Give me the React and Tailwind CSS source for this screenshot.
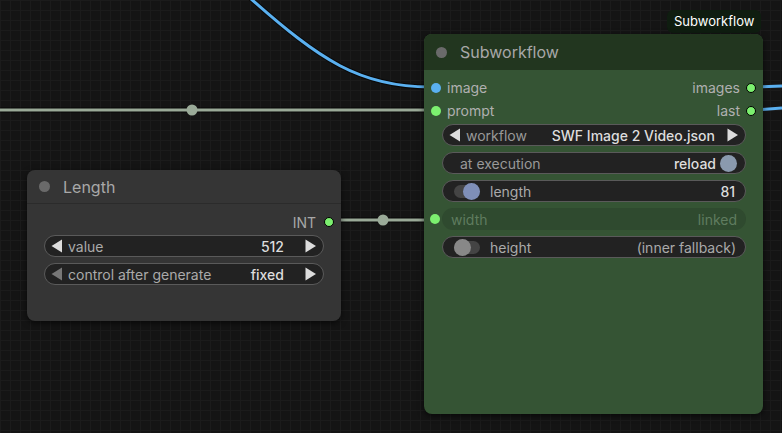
import React from "react";

const font = { fontFamily: "Inter, 'Noto Sans', sans-serif" };

function Dot({ color = "bg-[#7cf06f]" }) {
  return <span className={`inline-block w-[10px] h-[10px] rounded-full border border-black ${color}`} />;
}

function Arrow({ dir, dim }) {
  const d = dir === "left" ? "M11 0.5 L11 13.5 L0.5 7 Z" : "M0.5 0.5 L0.5 13.5 L11 7 Z";
  return (
    <svg width="12" height="14" viewBox="0 0 12 14" className="block">
      <path d={d} fill={dim ? "#777" : "#ddd"} />
    </svg>
  );
}

function Widget({ children, faded }) {
  return (
    <div
      className={`h-[22px] rounded-full flex items-center text-[14px] ${
        faded ? "bg-[#2f4a2f]" : "bg-[#222] border border-[#5a5a5a]"
      }`}
    >
      {children}
    </div>
  );
}

function LengthNode() {
  return (
    <div className="absolute left-[27px] top-[170px] w-[314px] h-[151px] rounded-lg bg-[#353535] shadow-[0_2px_6px_rgba(0,0,0,0.6)]">
      <div className="h-[34px] flex items-center gap-[13px] px-[12px] border-b border-[#2b2b2b]">
        <span className="w-[11px] h-[11px] rounded-full bg-[#6a6a6a]" />
        <span className="text-[16px] text-[#a8a8a8]">Length</span>
      </div>
      <div className="flex justify-end items-center gap-[8px] pr-[7px] h-[28px] mt-[4px]">
        <span className="text-[14px] text-[#a8a8a8]">INT</span>
        <Dot />
      </div>
      <div className="flex flex-col gap-[6px] px-[17px] mt-[-1px]">
        <Widget>
          <span className="pl-[6px]"><Arrow dir="left" /></span>
          <span className="ml-[5px] text-[#aaa]">value</span>
          <span className="ml-auto font-medium text-[#ddd]">512</span>
          <span className="ml-[21px] pr-[6px]"><Arrow dir="right" /></span>
        </Widget>
        <Widget>
          <span className="pl-[6px]"><Arrow dir="left" dim /></span>
          <span className="ml-[5px] text-[#aaa]">control after generate</span>
          <span className="ml-auto font-medium text-[#ddd]">fixed</span>
          <span className="ml-[21px] pr-[6px]"><Arrow dir="right" /></span>
        </Widget>
      </div>
    </div>
  );
}

function SubworkflowNode() {
  return (
    <>
      <div className="absolute left-[667px] top-[10px] h-[23px] px-[7px] rounded-md bg-[#0f1d10] text-white text-[13px] flex items-center">
        Subworkflow
      </div>
      <div className="absolute left-[424px] top-[34px] w-[339px] h-[380px] rounded-lg bg-[#355434] shadow-[0_2px_6px_rgba(0,0,0,0.6)] overflow-hidden">
        <div className="h-[36px] flex items-center gap-[13px] px-[12px] bg-[#22361f]">
          <span className="w-[11px] h-[11px] rounded-full bg-[#6a6a6a]" />
          <span className="text-[16px] text-[#a8a8a8]">Subworkflow</span>
        </div>
        <div className="flex flex-col pt-[6px]">
          <div className="flex items-center h-[23px] px-[7px]">
            <Dot color="bg-[#5ab0f0] border-transparent" />
            <span className="ml-[6px] text-[14px] text-[#b0b0b0]">image</span>
            <span className="ml-auto mr-[6px] text-[14px] text-[#b0b0b0]">images</span>
            <Dot />
          </div>
          <div className="flex items-center h-[23px] px-[7px]">
            <Dot color="bg-[#7cf06f] border-transparent" />
            <span className="ml-[6px] text-[14px] text-[#b0b0b0]">prompt</span>
            <span className="ml-auto mr-[6px] text-[14px] text-[#b0b0b0]">last</span>
            <Dot />
          </div>
        </div>
        <div className="flex flex-col gap-[6px] mt-[2px] pl-[18px] pr-[17px]">
          <Widget>
            <span className="pl-[6px]"><Arrow dir="left" /></span>
            <span className="ml-[5px] text-[#999]">workflow</span>
            <span className="ml-auto font-medium text-[#ddd]">SWF Image 2 Video.json</span>
            <span className="ml-[12px] pr-[6px]"><Arrow dir="right" /></span>
          </Widget>
          <Widget>
            <span className="ml-[17px] text-[#999]">at execution</span>
            <span className="ml-auto font-medium text-[#ddd]">reload</span>
            <span className="ml-[4px] mr-[8px] w-[17px] h-[17px] rounded-full bg-[#8a9aae]" />
          </Widget>
          <Widget>
            <span className="ml-[11px] relative w-[26px] h-[13px] rounded-full bg-[#444]">
              <span className="absolute right-0 top-[-2px] w-[17px] h-[17px] rounded-full bg-[#7f8fb8]" />
            </span>
            <span className="ml-[10px] text-[#aaa]">length</span>
            <span className="ml-auto mr-[10px] font-medium text-[#ddd]">81</span>
          </Widget>
          <div className="relative">
            <span className="absolute left-[-12px] top-[6px] w-[10px] h-[10px] rounded-full bg-[#7cf06f]" />
            <Widget faded>
              <span className="ml-[9px] text-[#5f7c5f]">width</span>
              <span className="ml-auto mr-[9px] text-[#5f7c5f]">linked</span>
            </Widget>
          </div>
          <Widget>
            <span className="ml-[11px] relative w-[26px] h-[13px] rounded-full bg-[#444]">
              <span className="absolute left-0 top-[-2px] w-[17px] h-[17px] rounded-full bg-[#888]" />
            </span>
            <span className="ml-[10px] text-[#aaa]">height</span>
            <span className="ml-auto mr-[9px] text-[#aaa]">(inner fallback)</span>
          </Widget>
        </div>
      </div>
    </>
  );
}

function Wires() {
  return (
    <svg className="absolute inset-0" width="782" height="433">
      <path d="M250 -2 C 320 60, 360 87, 430 87" stroke="#000" strokeWidth="5" fill="none" opacity="0.6" />
      <path d="M250 -2 C 320 60, 360 87, 430 87" stroke="#5ab0f0" strokeWidth="3" fill="none" />
      <line x1="0" y1="110" x2="430" y2="110" stroke="#000" strokeWidth="5" opacity="0.6" />
      <line x1="0" y1="110" x2="430" y2="110" stroke="#9aaa98" strokeWidth="3" />
      <circle cx="192" cy="110" r="5.5" fill="#9aaa98" />
      <line x1="336" y1="220" x2="430" y2="220" stroke="#000" strokeWidth="5" opacity="0.6" />
      <line x1="336" y1="220" x2="430" y2="220" stroke="#9aaa98" strokeWidth="3" />
      <circle cx="383" cy="220" r="5.5" fill="#9aaa98" />
      <path d="M757 87 L782 86" stroke="#5ab0f0" strokeWidth="3" fill="none" />
      <path d="M757 110 L782 108" stroke="#5ab0f0" strokeWidth="3" fill="none" />
    </svg>
  );
}

export default function App() {
  return (
    <div
      style={font}
      className="relative w-[782px] h-[433px] overflow-hidden bg-[#141414] bg-[linear-gradient(#1b1b1b_1px,transparent_1px),linear-gradient(90deg,#1b1b1b_1px,transparent_1px)] bg-[size:10px_10px]"
    >
      <Wires />
      <LengthNode />
      <SubworkflowNode />
    </div>
  );
}
